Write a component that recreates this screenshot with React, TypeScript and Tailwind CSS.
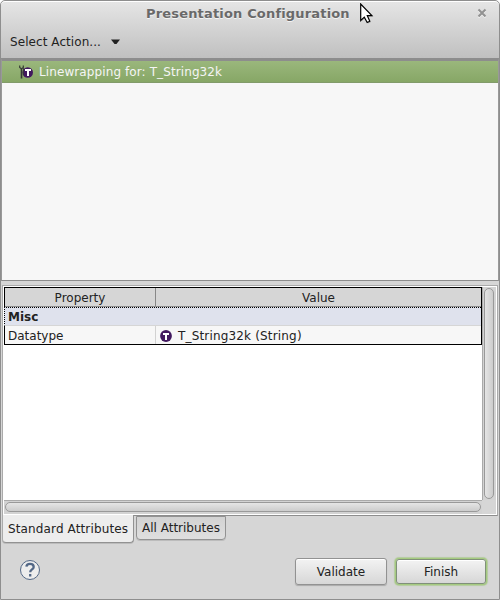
import React from "react";

function TypeIcon({ tool = false }: { tool?: boolean }) {
  return tool ? (
    <svg width="14" height="14" viewBox="0 0 14 14" className="shrink-0">
      <circle cx="8.7" cy="7.5" r="5.3" fill="#42195f" />
      <path d="M6 4h6v2h-2v5H8V6H6z" fill="#fff" />
      <path d="M.7 .5v2l1.3 1h1l1.3-1v-2" fill="none" stroke="#363a35" strokeWidth="1.2" />
      <path d="M2.5 3v10.5" fill="none" stroke="#363a35" strokeWidth="1.6" />
      <path d="M4.5 3v7" fill="none" stroke="#363a35" strokeWidth=".8" />
    </svg>
  ) : (
    <svg width="12" height="12" viewBox="0 0 12 12" className="shrink-0">
      <circle cx="6" cy="6" r="5.9" fill="#42195f" />
      <path d="M3 3h6v2H7v5H5V5H3z" fill="#fff" />
    </svg>
  );
}

export default function App() {
  return (
    <div className="relative flex h-[600px] w-[500px] flex-col overflow-hidden rounded-t-[5px] border border-[#8e8e8e] bg-[#d6d6d6] font-['DejaVu_Sans',sans-serif] text-[12px] leading-[16px] text-[#222]">
      <header className="h-[57px] shrink-0 rounded-t-[4px] border-t border-white bg-linear-to-b from-[#e5e5e5] to-[#c0c0c0]">
        <div className="flex h-[26px] items-start">
          <div className="ml-[145px] w-[330px] pt-[4px] text-[13px] font-bold tracking-[0.17px] whitespace-nowrap text-[#696969] [text-shadow:0_1px_0_#f4f4f4]">
            Presentation Configuration
          </div>
          <svg width="10" height="10" viewBox="0 0 10 10" className="mt-[6px] ml-[1px]">
            <path d="M1.5 2.5l7 7M8.5 2.5l-7 7" stroke="#f4f4f4" strokeWidth="2" />
            <path d="M1.5 1.5l7 7M8.5 1.5l-7 7" stroke="#929292" strokeWidth="2.1" />
          </svg>
        </div>
        <div className="flex h-[28px] items-center pl-[9px]">
          <span className="w-[101px] pb-px tracking-[0.07px] whitespace-nowrap">Select Action...</span>
          <svg width="9" height="6" viewBox="0 0 9 6">
            <path d="M0 .5h9L5.5 5h-2z" fill="#222" />
          </svg>
        </div>
      </header>

      <section className="h-[223px] shrink-0 border-x border-t-[3px] border-b border-x-[#999] border-t-[#8d8d8d] border-b-[#8d8d8d] bg-[#f7f7f7]">
        <div className="flex h-[22px] items-center border-b border-[#829b6a] bg-linear-to-b from-[#9ab77c] to-[#87a766] pl-[17px] text-[#f5f5f5]">
          <TypeIcon tool />
          <span className="ml-[6px] tracking-[0.1px] whitespace-nowrap">Linewrapping for: T_String32k</span>
        </div>
      </section>

      <section className="mt-[4px] mr-px ml-px flex h-[231px] shrink-0 flex-col border border-[#aaa] border-b-[#8d8d8d] bg-white">
        <div className="flex h-[214px] pt-px pl-px">
          <div className="w-[478px]">
            <div className="h-[58px] border border-black bg-[#f7f7f7]">
              <div className="flex h-[19px] border-b border-[#8d8d8d] bg-[#d6d6d6] text-center">
                <div className="w-[151px] border-r border-[#888] pt-[2px]">Property</div>
                <div className="flex-1 pt-[2px]">Value</div>
              </div>
              <div className="-ml-px h-[19px] border-t border-b border-l border-dotted border-black bg-[#dfe2ed] pl-[3px] font-bold [border-bottom:1px_solid_#d6d6d6]">
                <div className="pt-px">Misc</div>
              </div>
              <div className="flex h-[18px] items-center">
                <div className="h-[18px] w-[151px] border-r border-[#d2d2d2] pl-[3px]">
                  <div className="pt-[2px]">Datatype</div>
                </div>
                <div className="flex items-center pt-[2px] pl-[4px]">
                  <TypeIcon />
                  <span className="ml-[6px] tracking-[0.17px] whitespace-nowrap">T_String32k (String)</span>
                </div>
              </div>
            </div>
          </div>
          <div className="h-[213px] w-[14px] border-l border-[#aaa] bg-[#d3d3d3] pt-px pl-px">
            <div className="h-[211px] w-[10px] rounded-[5px] border border-[#999] bg-linear-to-r from-[#e5e5e5] to-[#ccc]" />
          </div>
        </div>
        <div className="ml-px flex h-[14px] w-[492px] bg-[#d6d6d6]">
          <div className="h-[14px] w-[478px] border-t border-[#aaa] bg-[#d3d3d3] pt-px pl-px">
            <div className="h-[10px] w-[476px] rounded-[5px] border border-[#999] bg-linear-to-b from-[#e5e5e5] to-[#ccc]" />
          </div>
        </div>
      </section>

      <nav className="relative -mt-px ml-px flex h-[29px] shrink-0 items-start whitespace-nowrap">
        <div className="h-[28px] w-[132px] rounded-b-[4px] border border-t-0 border-[#929292] border-l-[#aaa] bg-[#ededed] pt-[6px] pl-[5px] tracking-[0.13px] shadow-[0_1px_0_#bcbcbc]">
          Standard Attributes
        </div>
        <div className="mt-px ml-[2px] h-[24px] w-[90px] rounded-b-[4px] border border-[#929292] bg-linear-to-b from-[#d2d2d2] to-[#dfdfdf] pt-[3px] pl-[5px] shadow-[0_1px_0_#bcbcbc]">
          All Attributes
        </div>
      </nav>

      <footer className="flex flex-1 items-start pt-[14px] pl-[18px]">
        <svg width="22" height="22" viewBox="0 0 22 22" className="mt-[1px]">
          <circle cx="11" cy="11" r="9.5" fill="#ededed" stroke="#536887" strokeWidth="1" />
          <path d="M7.4 7.6C7.5 5.7 9 4.9 11 4.9s3.7 1 3.7 3c0 2.5-3.5 2.5-3.5 5.4M11.2 15v2.5" fill="none" stroke="#536887" strokeWidth="2.3" />
        </svg>
        <button className="ml-[254px] h-[27px] w-[92px] rounded-[3px] border border-[#929292] bg-linear-to-b from-[#f3f3f3] to-[#d7d7d7] shadow-[inset_0_1px_0_#fff,0_1px_1px_#aaa]">
          Validate
        </button>
        <button className="mt-px ml-[9px] h-[25px] w-[90px] rounded-[3px] border border-[#80907a] bg-linear-to-b from-[#f3f3f3] to-[#d7d7d7] shadow-[inset_0_1px_0_#fff,0_0_0_1px_#a5ca80,0_0_1px_2px_#b4cb9f]">
          Finish
        </button>
      </footer>

      <svg width="16" height="22" viewBox="0 0 16 22" className="absolute top-[2px] left-[359px]">
        <path d="M.7 1v16.5l3.6-3.4 2.9 5.4 2.6-1.2-2.5-5.6h4.6z" fill="#777" opacity=".35" transform="translate(1 1)" />
        <path d="M.7 1v16.5l3.6-3.4 2.9 5.4 2.6-1.2-2.5-5.6h4.6z" fill="white" stroke="black" strokeWidth="1.2" />
      </svg>
    </div>
  );
}
